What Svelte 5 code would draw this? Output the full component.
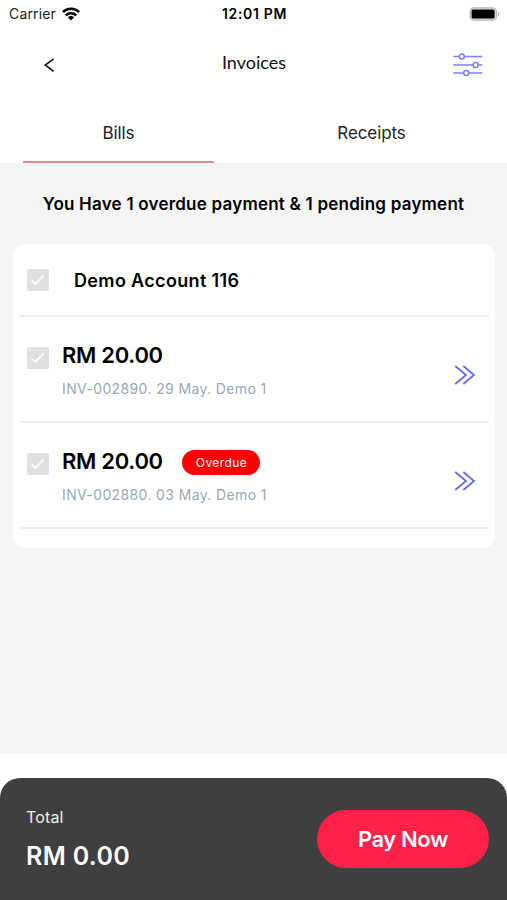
<script lang="ts">
  interface Bill {
    id: string;
    amount: number;
    date: string;
    account: string;
    overdue: boolean;
  }

  const account = 'Demo Account 116';
  const tabs = ['Bills', 'Receipts'];

  const bills: Bill[] = [
    { id: 'INV-002890', amount: 20, date: '29 May', account: 'Demo 1', overdue: false },
    { id: 'INV-002880', amount: 20, date: '03 May', account: 'Demo 1', overdue: true },
  ];

  let activeTab = $state('Bills');
  let total = $state(0);

  function formatAmount(value: number): string {
    return `RM ${value.toFixed(2)}`;
  }
</script>

{#snippet checkbox()}
  <svg class="checkbox" width="22" height="22" viewBox="0 0 22 22">
    <rect width="22" height="22" rx="1.5" fill="#e0e0e0" />
    <path d="M4.6 11.4 L8.6 15 L16.8 6" fill="none" stroke="#fff" stroke-width="1.7" />
  </svg>
{/snippet}

<div class="screen">
  <div class="status">
    <div class="carrier">
      <span>Carrier</span>
      <svg width="18" height="14" viewBox="0 0 18 14">
        <g fill="none" stroke="#000" stroke-width="2.5">
          <path d="M0.9 5.1 A11.6 11.6 0 0 1 17.1 5.1" />
          <path d="M3.8 8.3 A7.4 7.4 0 0 1 14.2 8.3" />
        </g>
        <path d="M5.8 10.3 A4.6 4.6 0 0 1 12.2 10.3 L9 13.6 Z" />
      </svg>
    </div>
    <div class="time">12:01 PM</div>
    <svg class="battery" width="31" height="14" viewBox="0 0 31 14">
      <rect x="1" y="0.8" width="26.4" height="12.4" rx="3.8" fill="#ddd" stroke="#b8b8b8" stroke-width="1.2" />
      <rect x="2.6" y="2.4" width="23" height="9.2" rx="1.6" />
      <path d="M28.8 4.8 Q30.6 5.6 30.6 7 Q30.6 8.4 28.8 9.2 Z" fill="#b4b4b4" />
    </svg>
  </div>

  <header>
    <svg class="back" width="12" height="16" viewBox="0 0 12 16">
      <path d="M10.6 1.8 L2.2 8 L10.6 14.4" fill="none" stroke="#111" stroke-width="1.6" />
    </svg>
    <h1>Invoices</h1>
    <svg class="filter" width="30" height="24" viewBox="0 0 30 24">
      <g stroke="#8081f2" stroke-width="1.5" fill="#fff">
        <path d="M0.3 3.6 H29.3 M0.3 11.9 H29.3 M0.3 20.1 H29.3" />
        <circle cx="8.8" cy="3.6" r="2.5" />
        <circle cx="22.6" cy="11.9" r="2.5" />
        <circle cx="13.2" cy="20.1" r="2.5" />
      </g>
    </svg>
  </header>

  <nav>
    {#each tabs as tab}
      <button class="tab" class:active={tab === activeTab} onclick={() => (activeTab = tab)}>
        {tab}
      </button>
    {/each}
  </nav>

  <main>
    <p class="notice">You Have 1 overdue payment &amp; 1 pending payment</p>

    <div class="card">
      <div class="row account">
        {@render checkbox()}
        <span>{account}</span>
      </div>

      {#each bills as bill}
        <div class="row bill">
          {@render checkbox()}
          <div class="info">
            <div class="top">
              <span class="amount">{formatAmount(bill.amount)}</span>
              {#if bill.overdue}
                <span class="badge">Overdue</span>
              {/if}
            </div>
            <div class="meta">{bill.id}. {bill.date}. {bill.account}</div>
          </div>
          <svg class="more" width="22" height="20" viewBox="0 0 22 20">
            <path
              d="M1.2 1 L12 10 L1.2 19 M9.4 1 L20 10 L9.4 19"
              fill="none"
              stroke="#6b69ec"
              stroke-width="1.8"
            />
          </svg>
        </div>
      {/each}
    </div>
  </main>

  <footer>
    <div>
      <div class="label">Total</div>
      <div class="total">{formatAmount(total)}</div>
    </div>
    <button class="pay">Pay Now</button>
  </footer>
</div>

<style>
  :global(body) {
    background: #fff;
  }

  .screen {
    display: flex;
    flex-direction: column;
    height: 900px;
    overflow: hidden;
    font-family: Inter, sans-serif;
    color: #000;
  }

  button {
    border: 0;
    padding: 0;
    background: none;
    font-family: inherit;
    cursor: pointer;
  }

  svg {
    display: block;
    flex: none;
  }

  .status {
    display: grid;
    grid-template-columns: 1fr auto 1fr;
    align-items: center;
    height: 27px;
    padding: 0 7px 0 9px;
    font-size: 14px;
  }

  .carrier {
    display: flex;
    align-items: center;
    gap: 6px;
    letter-spacing: 0.15px;
    color: #222;
  }

  .time {
    font-weight: 600;
    letter-spacing: 0.65px;
  }

  .battery {
    justify-self: end;
  }

  header {
    display: flex;
    align-items: center;
    justify-content: space-between;
    height: 75px;
    padding: 0 24px 0 43px;
  }

  h1 {
    margin: 0 0 5px;
    font-family: Lato, sans-serif;
    font-size: 18px;
    font-weight: 400;
    line-height: 24px;
    color: #111;
  }

  nav {
    display: flex;
    justify-content: space-between;
    height: 61px;
    padding: 0 40px 0 23px;
  }

  .tab {
    width: 191px;
    padding-top: 2px;
    border-bottom: 2px solid transparent;
    font-size: 17px;
    letter-spacing: -0.1px;
    color: #222;
  }

  .tab.active {
    border-bottom-color: #e8839a;
  }

  main {
    height: 591px;
    background: #f5f5f5;
  }

  .notice {
    margin: 0;
    padding: 29px 0 28px;
    font-size: 17px;
    font-weight: 600;
    line-height: 24px;
    letter-spacing: 0.22px;
    text-align: center;
  }

  .card {
    margin: 0 12px 0 13px;
    padding: 0 6px 19px 7px;
    border-radius: 12px;
    background: #fff;
  }

  .row {
    display: flex;
    box-sizing: border-box;
    border-bottom: 2px solid #eee;
    padding-left: 7px;
  }

  .account {
    align-items: center;
    gap: 25px;
    height: 73px;
    font-size: 18px;
    font-weight: 600;
    letter-spacing: 0.35px;
  }

  .account span {
    padding-top: 1px;
  }

  .bill {
    height: 106px;
    padding-top: 23px;
  }

  .bill .checkbox {
    margin-top: 7px;
  }

  .info {
    flex: 1;
    margin-left: 13px;
  }

  .top {
    display: flex;
    align-items: center;
    gap: 19px;
    height: 30px;
  }

  .amount {
    font-size: 22px;
    font-weight: 600;
    letter-spacing: -0.3px;
  }

  .badge {
    margin-top: 2px;
    padding: 0 13px 0 14px;
    border-radius: 13px;
    background: #f00;
    color: #fff;
    font-size: 12px;
    line-height: 25px;
    letter-spacing: 0.4px;
  }

  .meta {
    margin-top: 9px;
    font-size: 14px;
    line-height: 20px;
    letter-spacing: 0.37px;
    color: #9aa9b8;
  }

  .more {
    margin: 25px 13px 0 0;
  }

  footer {
    display: flex;
    align-items: center;
    justify-content: space-between;
    box-sizing: border-box;
    height: 122px;
    margin-top: 24px;
    padding: 0 18px 0 26px;
    border-radius: 20px 20px 0 0;
    background: #3f3f3f;
    color: #fff;
  }

  .label {
    margin-top: -1px;
    font-size: 16px;
    line-height: 24px;
    letter-spacing: 0.15px;
    color: #eee;
  }

  .total {
    margin-top: 11px;
    font-size: 25px;
    font-weight: 600;
    line-height: 32px;
    letter-spacing: 0.35px;
  }

  .pay {
    width: 172px;
    height: 58px;
    border-radius: 29px;
    background: #ff2147;
    color: #fff;
    font-size: 22px;
    font-weight: 600;
    letter-spacing: -0.4px;
  }
</style>
